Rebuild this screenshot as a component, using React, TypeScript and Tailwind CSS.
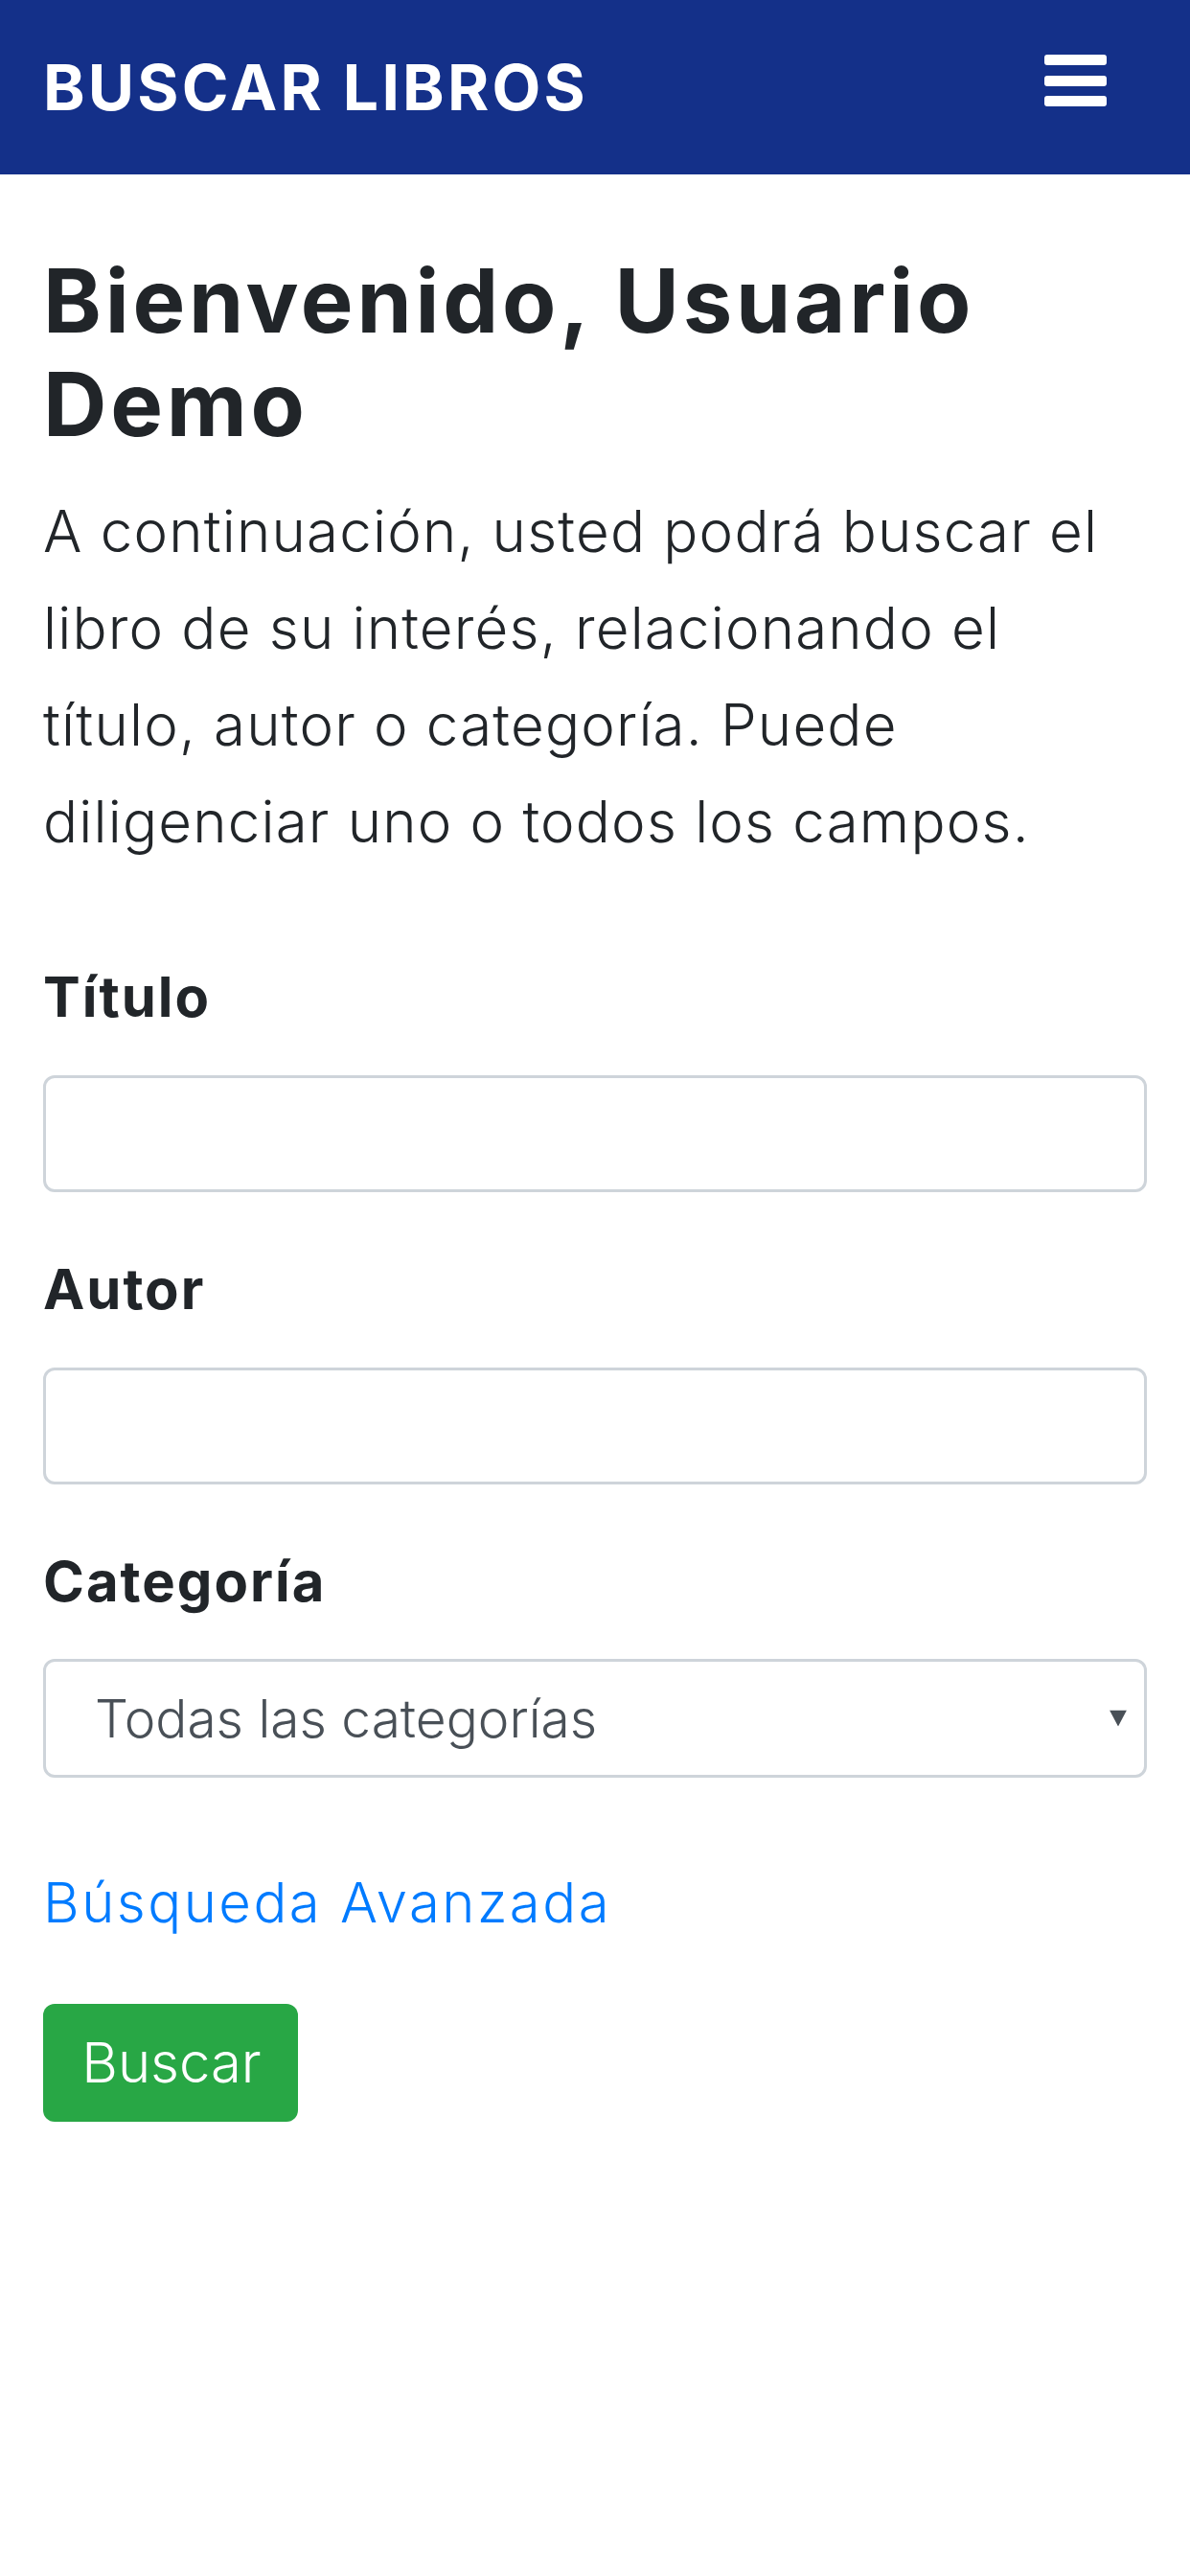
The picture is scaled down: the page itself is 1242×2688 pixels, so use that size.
import React from "react";

const fontStack = 'Inter, "Noto Sans", sans-serif';

export default function App() {
  return (
    <div className="min-h-[2688px] w-[1242px] bg-white" style={{ fontFamily: fontStack }}>
      <header className="flex h-[182px] items-center justify-between bg-[#143089] px-[45px]">
        <span className="text-[66px] font-bold leading-none tracking-[3.2px] text-white">BUSCAR LIBROS</span>
        <button className="mb-[14px] mr-[42px] flex w-[65px] flex-col gap-[10.5px]" aria-label="menu">
          <span className="block h-[11px] rounded-[3px] bg-white" />
          <span className="block h-[11px] rounded-[3px] bg-white" />
          <span className="block h-[11px] rounded-[3px] bg-white" />
        </button>
      </header>
      <main className="px-[45px]">
        <h1 className="mt-[78px] text-[92px] font-bold leading-[108px] tracking-[3.8px] text-[#212529]">Bienvenido, Usuario Demo</h1>
        <p className="mt-[28px] text-[60px] font-light leading-[101px] tracking-[1.2px] text-[#212529]">
          A continuación, usted podrá buscar el
          <br />
          libro de su interés, relacionando el
          <br />
          título, autor o categoría. Puede
          <br />
          diligenciar uno o todos los campos.
        </p>
        <form className="flex flex-col">
          <label className="mt-[97px] text-[58px] font-bold leading-[70px] tracking-[2px] text-[#212529]">Título</label>
          <input className="mt-[47px] h-[122px] w-full rounded-[12px] border-[3px] border-[#ced4da] bg-white" />
          <label className="mt-[66px] text-[58px] font-bold leading-[70px] tracking-[2px] text-[#212529]">Autor</label>
          <input className="mt-[47px] h-[122px] w-full rounded-[12px] border-[3px] border-[#ced4da] bg-white" />
          <label className="mt-[66px] text-[58px] font-bold leading-[70px] tracking-[2px] text-[#212529]">Categoría</label>
          <div className="relative mt-[46px] flex h-[124px] w-full items-center rounded-[12px] border-[3px] border-[#ced4da] bg-white pl-[51px]">
            <span className="text-[55px] font-light text-[#495057]">Todas las categorías</span>
            <svg className="absolute right-[18px] top-[50%] -translate-y-1/2" width="18" height="17" viewBox="0 0 18 17">
              <polygon points="0,0 18,0 9,17" fill="#495057" />
            </svg>
          </div>
          <a className="mt-[95px] text-[58px] font-light leading-[70px] tracking-[2.5px] text-[#007bff]" href="#">Búsqueda Avanzada</a>
          <button type="button" className="mt-[71px] h-[123px] w-[266px] rounded-[12px] bg-[#28a745] pl-[2px] text-[58px] font-light text-white">Buscar</button>
        </form>
      </main>
    </div>
  );
}
